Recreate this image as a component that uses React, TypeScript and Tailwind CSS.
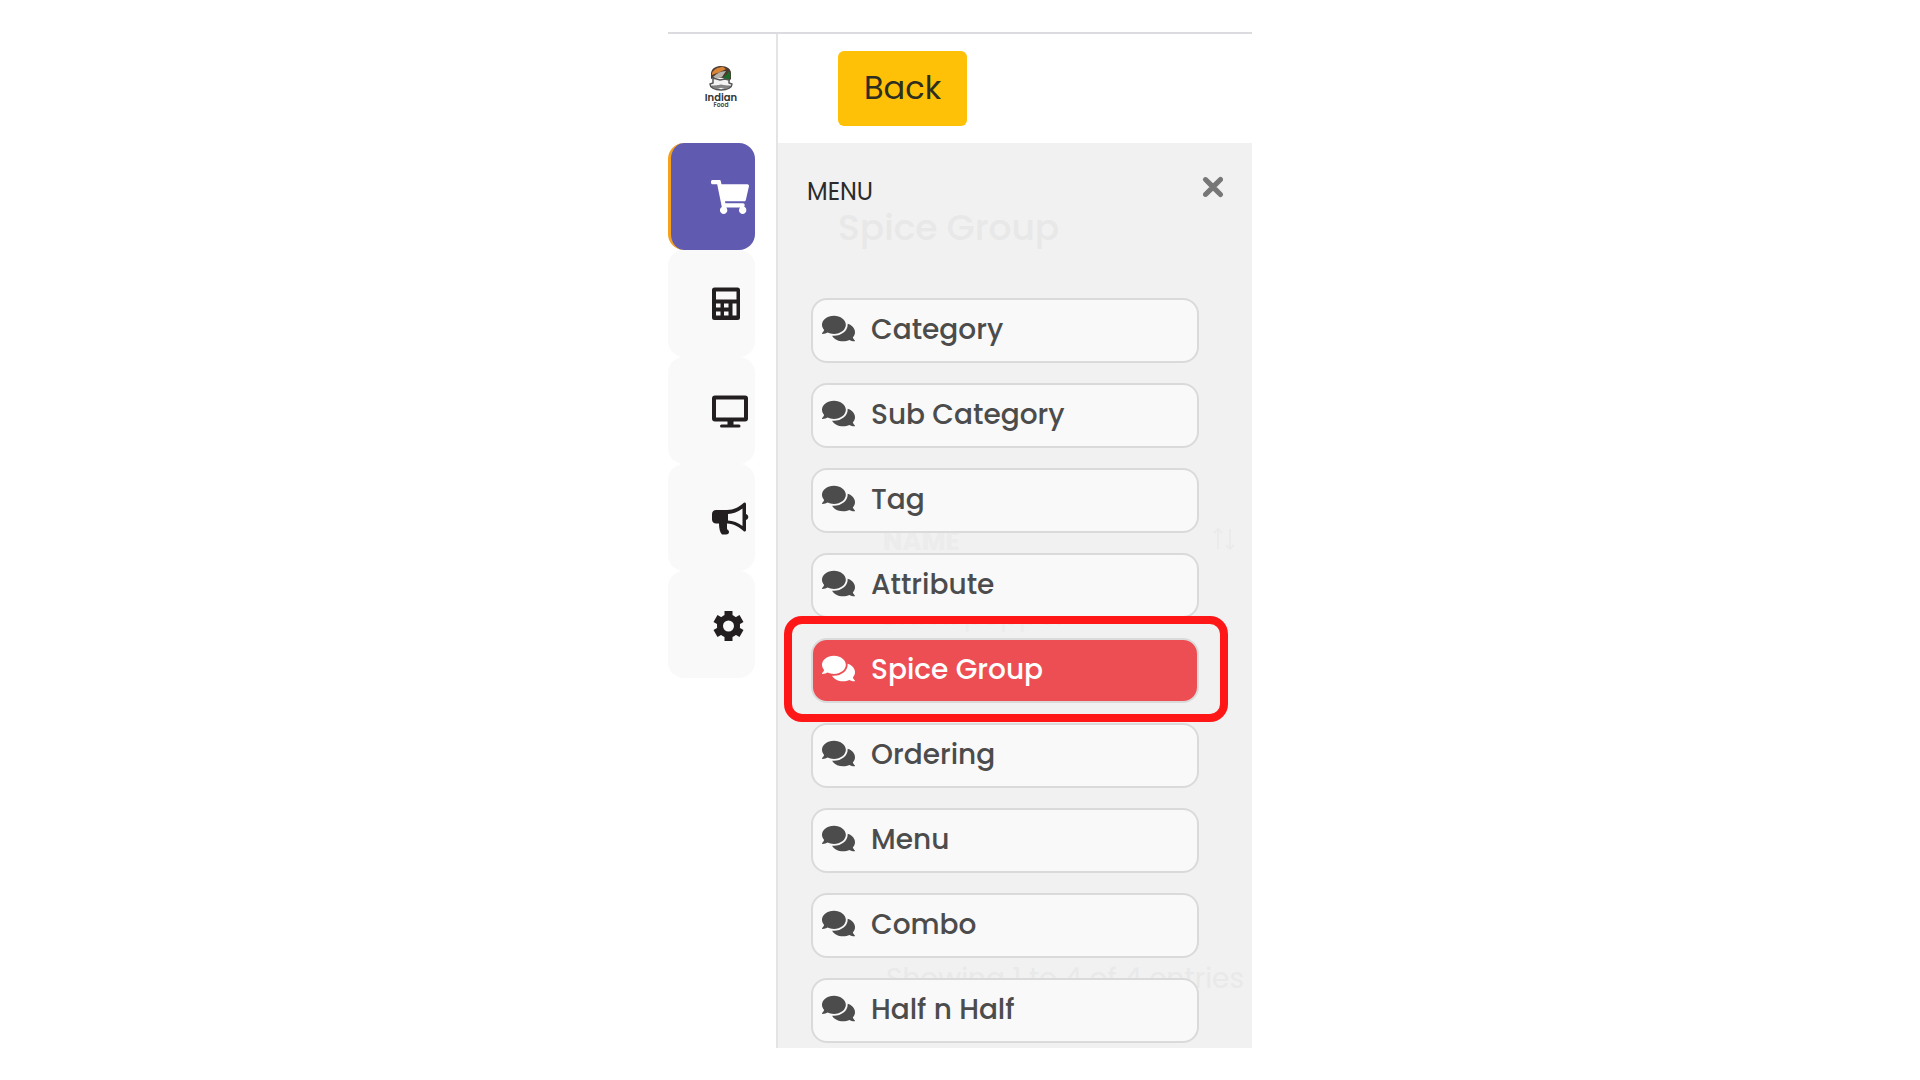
import { FaShoppingCart, FaComments } from "react-icons/fa";
import { FaXmark } from "react-icons/fa6";

const menuItems = [
  "Category",
  "Sub Category",
  "Tag",
  "Attribute",
  "Spice Group",
  "Ordering",
  "Menu",
  "Combo",
  "Half n Half",
];
const activeItem = "Spice Group";

function Logo() {
  return (
    <svg viewBox="0 0 34 44" className="h-11 w-[34px]" role="img" aria-label="Indian Food">
      <path d="M7 8C8 3 12 1 17 1c6 0 10 3 10 7v6l-3 3-5-4-7-1-5 2z" fill="#4b3a31" />
      <path d="M8 8c2-4 6-6 11-6l3 2-6 3-8 3z" fill="#d98538" />
      <path d="M9 12c4-4 8-6 13-6l-4 6-6 1z" fill="#b9b4ae" />
      <path d="M19 12c2-1 5-3 6-6 2 3 2 6 0 10l-4-2z" fill="#1c6b2a" />
      <path d="M9 13v5l-3 1c0 3 4 6 11 6s11-3 11-6l-3-1v-3l-4-1-5 1z" fill="#f4f4f4" stroke="#555" strokeWidth="1.500" />
      <path d="M8 21c3 0 5 0 9-1 4 1 6 1 9 1-2 3-6 3-9 1-3 2-7 2-9-1z" fill="#888" stroke="#777" />
      <text x="17" y="36" textAnchor="middle" fontSize="10" fontWeight="600" fill="#333" fontFamily="Poppins, Inter, sans-serif">Indian</text>
      <text x="17" y="42" textAnchor="middle" fontSize="6" fontWeight="600" fill="#444" fontFamily="Poppins, Inter, sans-serif">Food</text>
    </svg>
  );
}

function CalculatorIcon() {
  return (
    <svg viewBox="0 0 36 36" className="size-9" fill="#231f20" fillRule="evenodd">
      <path d="M2.500 1.500h23a2.500 2.500 0 0 1 2.500 2.500v27.500a2.500 2.500 0 0 1-2.500 2.500h-23A2.500 2.500 0 0 1 0 31.500V4a2.500 2.500 0 0 1 2.500-2.500zM4 5.500v8h20.500v-8zM4 17.500v4h4.500v-4zM12 17.500v4h4.500v-4zM4 25.500v4h4.500v-4zM12 25.500v4h4.500v-4zM20.500 17.500v12h4v-12z" />
    </svg>
  );
}

function MonitorIcon() {
  return (
    <svg viewBox="0 0 36 36" className="size-9" fill="#231f20" fillRule="evenodd">
      <path d="M3 2.500h30a3 3 0 0 1 3 3v20a3 3 0 0 1-3 3H21.500v3H27a1.500 1.500 0 0 1 0 3H9.500a1.500 1.500 0 0 1 0-3H15.500v-3H3a3 3 0 0 1-3-3v-20a3 3 0 0 1 3-3zM4 6.500v18h28v-18z" />
    </svg>
  );
}

function MegaphoneIcon() {
  return (
    <svg viewBox="0 0 37 36" className="h-9 w-[37px]" fill="#231f20" fillRule="evenodd">
      <path d="M4 10h11c7 0 12-3 16.500-7 1-1 2.500-.5 2.500 1v10c3 1 3 5 0 6v10c0 1.500-1.500 2-2.500 1-4.500-4-9-7-16.500-7.500v5c0 1.500 2 1.500 2 3.500 0 1.500-1 2.500-3 2.500H10c-2-2-3-6-3-11H4c-2 0-4-1.500-4-4V14c0-2.500 2-4 4-4zM16 14v6.500c5 .3 10 2 14.500 5.500V8.500C26 12 21 13.700 16 14z" />
    </svg>
  );
}

function GearIcon() {
  return (
    <svg viewBox="0 0 36 36" className="size-9" fill="none" stroke="#231f20">
      <circle cx="16.500" cy="19" r="8.500" strokeWidth="6" />
      <path d="M16.500 4v6M16.500 28v6M3.500 11.500l5.200 3M24.300 23.500l5.200 3M3.500 26.500l5.200-3M24.300 14.500l5.200-3" strokeWidth="8" strokeLinejoin="round" />
    </svg>
  );
}

function SortIcon() {
  return (
    <svg viewBox="0 0 24 24" className="absolute top-[384px] right-[16px] size-6" fill="none" stroke="#ebebeb" strokeWidth="2">
      <path d="M6 22V2M2 6l4-4 4 4M18 2v20M14 18l4 4 4-4" />
    </svg>
  );
}

const railItems = [
  { label: "Calculator", Icon: CalculatorIcon },
  { label: "Display", Icon: MonitorIcon },
  { label: "Marketing", Icon: MegaphoneIcon },
  { label: "Settings", Icon: GearIcon },
];

export default function App() {
  return (
    <div className="min-h-screen bg-white pt-8 font-['Poppins','Inter',sans-serif]">
      <div className="mx-auto flex w-full max-w-[584px] border-t-2 border-[#dcdce0]">
        <aside className="w-[110px] shrink-0 border-r-2 border-[#e4e4e6]">
          <div className="flex h-[109px] items-center justify-center pr-0.5 pb-1">
            <Logo />
          </div>
          <nav aria-label="Sections" className="flex w-[87px] flex-col">
            <button
              type="button"
              aria-label="Orders"
              className="flex h-[107px] items-center rounded-2xl border-l-3 border-[#f5a11f] bg-[#605bb0] pl-10 text-white"
            >
              <FaShoppingCart className="h-[34px] w-[38px]" />
            </button>
            {railItems.map(({ label, Icon }) => (
              <button
                key={label}
                type="button"
                aria-label={label}
                className="flex h-[107px] items-center rounded-2xl bg-[#f9f9f9] pl-11"
              >
                <Icon />
              </button>
            ))}
          </nav>
        </aside>

        <main className="min-w-0 flex-1">
          <header className="flex h-[109px] items-start pt-[17px] pl-[60px]">
            <button
              type="button"
              className="h-[75px] rounded-md bg-[#ffc107] px-[26px] pb-0.5 text-[32px] text-[#2d2d20]"
            >
              Back
            </button>
          </header>

          <section className="relative overflow-hidden bg-[#f1f1f1] pb-[5px]">
            <div aria-hidden="true" className="absolute inset-0 whitespace-nowrap">
              <p className="absolute top-[61px] left-[60px] text-[36px] leading-[48px] font-medium text-[#e8e8e8]">Spice Group</p>
              <p className="absolute top-[382px] left-[105px] text-[26px] leading-[32px] font-bold text-[#ececec]">NAME</p>
              <SortIcon />
              <p className="absolute top-[457px] left-[104px] text-[28px] leading-[32px] text-[#ececec]">Black pepper</p>
              <p className="absolute top-[818px] left-[108px] text-[28px] leading-[36px] text-[#e9e9e9]">Showing 1 to 4 of 4 entries</p>
            </div>
            <div className="relative flex h-[155px] items-start justify-between pt-[29px] pr-[24px] pl-[29px]">
              <h2 className="pt-1 text-[24px] leading-[32px] text-[#2b2b2b]">MENU</h2>
              <button type="button" aria-label="Close menu" className="text-[#777777]">
                <FaXmark className="size-[30px]" strokeWidth="24" stroke="currentColor" />
              </button>
            </div>
            <ul className="relative flex flex-col gap-5 pr-[53px] pl-[33px]">
              {menuItems.map((item) => {
                const active = item === activeItem;
                return (
                  <li key={item} className="relative">
                    <a
                      href="#"
                      aria-current={active ? "page" : undefined}
                      className={
                        active
                          ? "flex h-[65px] items-center gap-4 rounded-2xl border-2 border-[#dadada] bg-[#ed4e53] pb-px pl-[9px] text-[28px] font-medium text-white"
                          : "flex h-[65px] items-center gap-4 rounded-2xl border-2 border-[#dadada] bg-[#f9f9f9] pb-px pl-[9px] text-[28px] font-medium text-[#4c4c4c]"
                      }
                    >
                      <FaComments className="mb-1 size-[33px]" />
                      {item}
                    </a>
                    {active && (
                      <span
                        aria-hidden="true"
                        className="pointer-events-none absolute -top-[22px] -right-[29px] -bottom-[19px] -left-[27px] rounded-[18px] border-8 border-[#ff1616]"
                      />
                    )}
                  </li>
                );
              })}
            </ul>
          </section>
        </main>
      </div>
    </div>
  );
}
